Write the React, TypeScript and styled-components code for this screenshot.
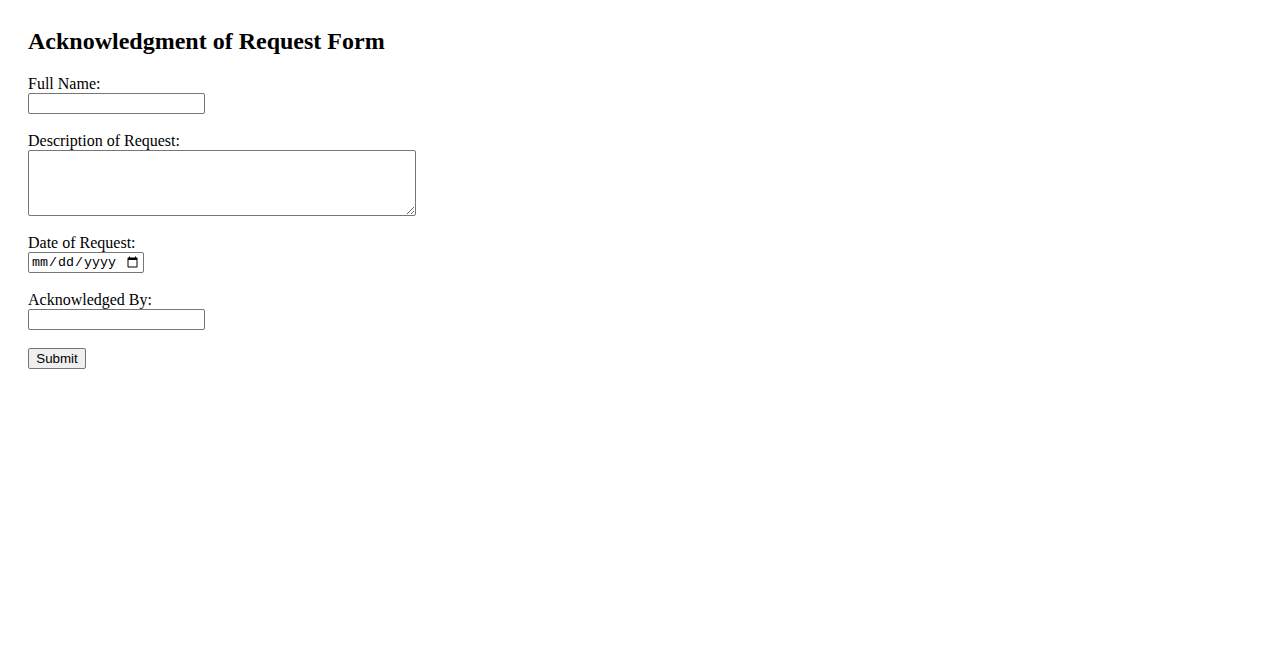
import React from "react";
import styled, { createGlobalStyle } from "styled-components";

const Global = createGlobalStyle`
  html, body { background: #fff; }
  body {
    margin: 0;
    padding: 28px;
    font-family: "Liberation Serif", "Times New Roman", serif;
    font-size: 16px;
    color: #000;
  }
`;

const Title = styled.h2`
  margin: 0 0 20px;
  font-size: 24px;
  font-weight: bold;
  font-family: "Liberation Serif", "Times New Roman", serif;
`;

const Form = styled.form`
  display: flex;
  flex-direction: column;
  align-items: flex-start;
`;

const Group = styled.div`
  display: flex;
  flex-direction: column;
  align-items: flex-start;
  margin-bottom: 18px;
`;

const Label = styled.label`
  display: block;
  line-height: 18px;
`;

const TextInput = styled.input`
  box-sizing: border-box;
  width: ${(p) => p.$w}px;
  height: 21px;
  margin: 0;
  padding: 1px 2px;
  border: 1px solid #767676;
  border-radius: 2px;
  font-family: "Liberation Sans", Arial, sans-serif;
  font-size: 13.33px;
  background: #fff;
`;

const TextArea = styled.textarea`
  box-sizing: border-box;
  width: 388px;
  height: 66px;
  margin: 0;
  padding: 2px;
  border: 1px solid #767676;
  border-radius: 2px;
  font-family: "Liberation Mono", monospace;
  font-size: 13.33px;
`;

const DateInput = styled.input`
  box-sizing: border-box;
  width: 116px;
  height: 21px;
  margin: 0;
  padding: 1px 2px;
  border: 1px solid #767676;
  border-radius: 2px;
  font-family: "Liberation Mono", monospace;
  font-size: 13.33px;
  background: #fff;
`;

const Button = styled.button`
  box-sizing: border-box;
  height: 21px;
  width: 58px;
  margin: 0;
  padding: 1px 6px;
  border: 1px solid #767676;
  border-radius: 2px;
  background: #efefef;
  font-family: "Liberation Sans", Arial, sans-serif;
  font-size: 13.33px;
  color: #000;
`;

export default function App() {
  return (
    <>
      <Global />
      <Title>Acknowledgment of Request Form</Title>
      <Form onSubmit={(e) => e.preventDefault()}>
        <Group>
          <Label htmlFor="name">Full Name:</Label>
          <TextInput id="name" type="text" $w={177} />
        </Group>
        <Group>
          <Label htmlFor="desc">Description of Request:</Label>
          <TextArea id="desc" rows={4} />
        </Group>
        <Group>
          <Label htmlFor="date">Date of Request:</Label>
          <DateInput id="date" type="date" />
        </Group>
        <Group>
          <Label htmlFor="ack">Acknowledged By:</Label>
          <TextInput id="ack" type="text" $w={177} />
        </Group>
        <Button type="submit">Submit</Button>
      </Form>
    </>
  );
}
